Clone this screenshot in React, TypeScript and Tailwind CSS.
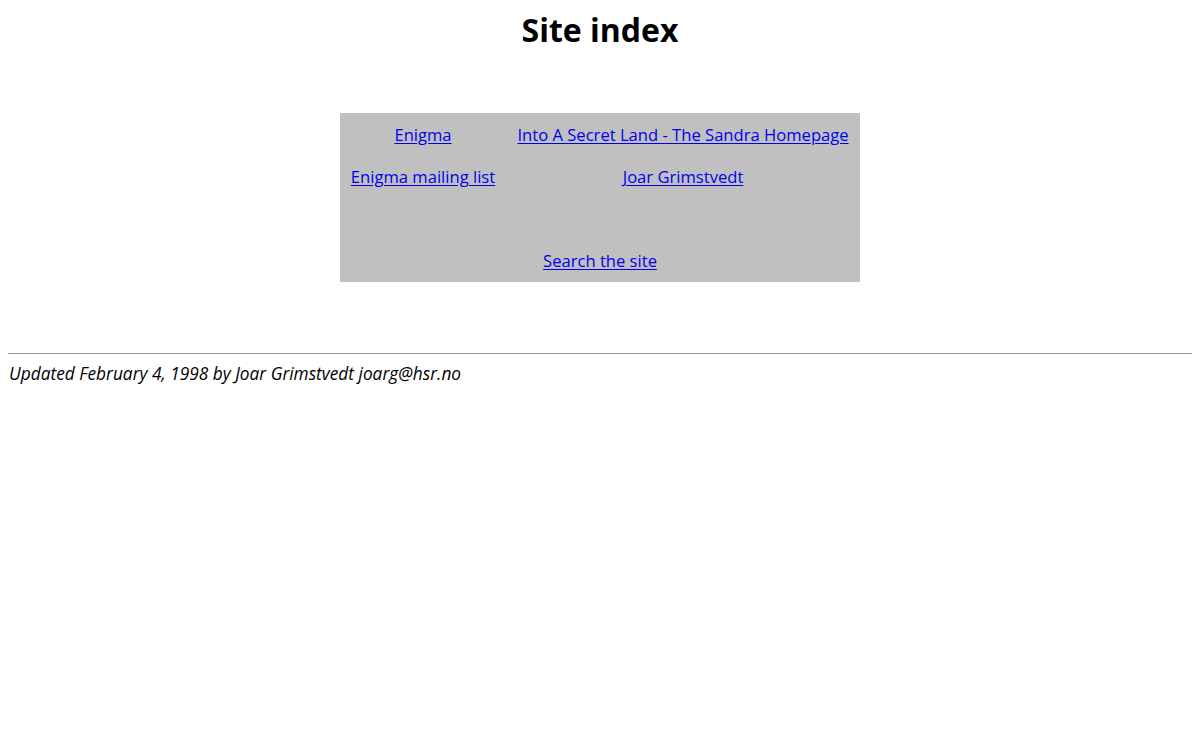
export default function App() {
  const link = "text-[#0000ee] underline underline-offset-2";
  const cell = "flex items-center justify-center pt-[2px]";
  return (
    <div className="min-h-[740px] bg-white px-2 text-black [font-family:'Open_Sans',sans-serif]">
      <h1 className="pt-[10px] text-center text-[32px] font-bold leading-[40px]">Site index</h1>

      <div className="mx-auto mt-[63px] grid h-[169px] w-[520px] grid-cols-[166px_354px] grid-rows-4 bg-[#c0c0c0] text-[16.6px]">
        <div className={cell}>
          <a href="#" className={link}>Enigma</a>
        </div>
        <div className={cell}>
          <a href="#" className={link}>Into A Secret Land - The Sandra Homepage</a>
        </div>
        <div className={cell}>
          <a href="#" className={link}>Enigma mailing list</a>
        </div>
        <div className={cell}>
          <a href="#" className={link}>Joar Grimstvedt</a>
        </div>
        <div className="col-span-2" />
        <div className={`col-span-2 ${cell}`}>
          <a href="#" className={link}>Search the site</a>
        </div>
      </div>

      <hr className="mt-[71px] border-t border-[#999]" />
      <p className="mt-[8px] pl-px text-[17.3px] italic leading-[24px]">
        Updated February 4, 1998 by Joar Grimstvedt joarg@hsr.no
      </p>
    </div>
  );
}
